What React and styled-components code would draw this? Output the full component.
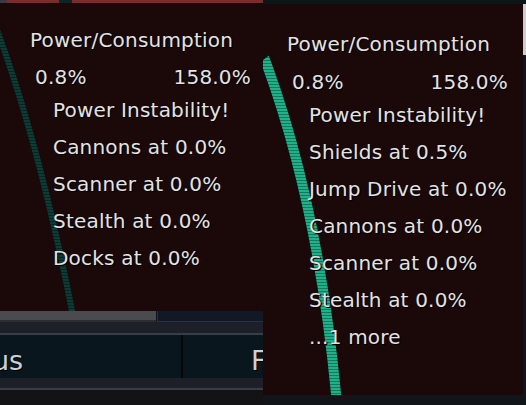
import React from "react";
import styled, { createGlobalStyle } from "styled-components";

const GlobalStyle = createGlobalStyle`
  html, body {
    margin: 0;
    padding: 0;
    background: #101317;
  }
  body {
    width: 526px;
    height: 405px;
    overflow: hidden;
    font-family: "DejaVu Sans", "Noto Sans", sans-serif;
  }
`;

const Screen = styled.div`
  display: flex;
  width: 526px;
  height: 405px;
  overflow: hidden;
  background: #101317;
`;

const Column = styled.div`
  width: ${(p) => p.$w}px;
  flex: none;
  display: flex;
  flex-direction: column;
  overflow: hidden;
  background: ${(p) => p.$bg || "transparent"};
`;

const Strip = styled.div`
  display: flex;
  flex: none;
  height: ${(p) => p.$h}px;
  background: ${(p) => p.$bg || "transparent"};
`;

const Segment = styled.div`
  flex: ${(p) => (p.$w ? "none" : 1)};
  width: ${(p) => (p.$w ? `${p.$w}px` : "auto")};
  background: ${(p) => p.$color};
`;

const Filler = styled.div`
  flex: 1;
  background: ${(p) => p.$bg};
`;

const Panel = styled.div`
  position: relative;
  flex: none;
  box-sizing: border-box;
  height: ${(p) => p.$h}px;
  padding: ${(p) => p.$pt}px 0 0 ${(p) => p.$pl}px;
  background: #1b0909;
  overflow: hidden;
`;

const ArcLayer = styled.svg`
  position: absolute;
  left: 0;
  top: 0;
  width: 100%;
  height: 100%;
  pointer-events: none;
`;

const Content = styled.div`
  position: relative;
  display: flex;
  flex-direction: column;
  font-size: 20px;
  line-height: 37px;
  letter-spacing: 0.2px;
  color: #e3e3e3;
  text-shadow: 1px 1px 0 #000, 1px 0 1px rgba(0, 0, 0, 0.7);
  white-space: nowrap;
`;

const Heading = styled.div`
  margin-left: 1px;
`;

const Numbers = styled.div`
  display: flex;
  justify-content: space-between;
  width: 216px;
  margin-left: 6px;
  margin-top: ${(p) => p.$mt || 0}px;
`;

const List = styled.div`
  display: flex;
  flex-direction: column;
  margin-left: ${(p) => p.$ml}px;
  margin-top: -4px;
`;

const Line = styled.div``;

const Scrollbar = styled.div`
  display: flex;
  flex: none;
  height: 11px;
`;

const Thumb = styled.div`
  width: 156px;
  flex: none;
  background: #4a4a4f;
  border-bottom: 2px solid #2c2c31;
  box-sizing: border-box;
`;

const Track = styled.div`
  flex: 1;
  margin-left: 1px;
  background: #121826;
  border-left: 1px solid #2a3144;
  border-bottom: 1px solid #2a3144;
  box-sizing: border-box;
`;

const Tabs = styled.div`
  display: flex;
  flex: none;
  height: 43px;
  background: #0a161e;
`;

const Tab = styled.div`
  box-sizing: border-box;
  flex: ${(p) => (p.$w ? "none" : 1)};
  width: ${(p) => (p.$w ? `${p.$w}px` : "auto")};
  display: flex;
  align-items: center;
  padding: 8px 0 0 ${(p) => p.$pl}px;
  overflow: hidden;
  font-size: 27px;
  color: #cfd0d2;
  text-shadow: 1px 1px 0 #000;
  white-space: nowrap;
`;

const TabLabel = styled.span`
  margin-left: ${(p) => p.$ml || 0}px;
`;

const TabDivider = styled.div`
  width: 2px;
  flex: none;
  background: #03070a;
`;

const EdgeLight = styled.div`
  height: 51px;
  flex: none;
  background: #cdcdcd;
`;

function StripedArc({ id, d, width, light, dark, clipTop = 0 }) {
  return (
    <ArcLayer>
      <defs>
        <pattern id={`${id}-p`} width="8" height="3" patternUnits="userSpaceOnUse">
          <rect width="8" height="3" fill={dark} />
          <rect width="8" height="2" fill={light} />
        </pattern>
        <clipPath id={`${id}-c`}>
          <polygon points={`0,${clipTop} 40,${clipTop - 30} 400,${clipTop - 30} 400,1000 0,1000`} />
        </clipPath>
      </defs>
      <path
        d={d}
        fill="none"
        stroke={`url(#${id}-p)`}
        strokeWidth={width}
        clipPath={`url(#${id}-c)`}
      />
    </ArcLayer>
  );
}

function PowerPanel({ h, pt, pl, listMl, numbersMt, items, arc }) {
  return (
    <Panel $h={h} $pt={pt} $pl={pl}>
      {arc}
      <Content>
        <Heading>Power/Consumption</Heading>
        <Numbers $mt={numbersMt}>
          <span>0.8%</span>
          <span>158.0%</span>
        </Numbers>
        <List $ml={listMl}>
          {items.map((t) => (
            <Line key={t}>{t}</Line>
          ))}
        </List>
      </Content>
    </Panel>
  );
}

export default function App() {
  return (
    <>
      <GlobalStyle />
      <Screen>
        <Column $w={263}>
          <Strip $h={3}>
            <Segment $w={7} $color="#3a3a42" />
            <Segment $w={52} $color="#7a2d2b" />
            <Segment $w={13} $color="#0c2626" />
            <Segment $color="#7a2d2b" />
          </Strip>
          <PowerPanel
            h={308}
            pt={19}
            pl={29}
            listMl={24}
            numbersMt={0}
            items={[
              "Power Instability!",
              "Cannons at 0.0%",
              "Scanner at 0.0%",
              "Stealth at 0.0%",
              "Docks at 0.0%",
            ]}
            arc={
              <StripedArc
                id="leftArc"
                d="M -3 27 Q 40 142 74 318"
                width={6}
                light="#0c3c36"
                dark="#072622"
              />
            }
          />
          <Scrollbar>
            <Thumb />
            <Track />
          </Scrollbar>
          <Strip $h={11} $bg="#1d2028" />
          <Strip $h={2} $bg="#3a3d48" />
          <Tabs>
            <Tab $w={181} $pl={0}>
              <TabLabel $ml={-8}>us</TabLabel>
            </Tab>
            <TabDivider />
            <Tab $pl={68}>
              <TabLabel>F</TabLabel>
            </Tab>
          </Tabs>
          <Strip $h={10} $bg="#1d2028" />
          <Strip $h={2} $bg="#3a3d48" />
          <Filler $bg="#131316" />
        </Column>
        <Column $w={260} $bg="#111418">
          <Strip $h={4} $bg="#0b1616" />
          <PowerPanel
            h={391}
            pt={22}
            pl={23}
            listMl={23}
            numbersMt={1}
            items={[
              "Power Instability!",
              "Shields at 0.5%",
              "Jump Drive at 0.0%",
              "Cannons at 0.0%",
              "Scanner at 0.0%",
              "Stealth at 0.0%",
              "...1 more",
            ]}
            arc={
              <StripedArc
                id="rightArc"
                d="M -4 40 Q 55 190 74 400"
                width={10}
                light="#21b089"
                dark="#0f7a5c"
                clipTop={56}
              />
            }
          />
          <Filler $bg="#111418" />
        </Column>
        <Column $w={3} $bg="#0d1719">
          <Strip $h={4} $bg="#0b1616" />
          <EdgeLight />
          <Filler $bg="#0d1719" />
        </Column>
      </Screen>
    </>
  );
}
